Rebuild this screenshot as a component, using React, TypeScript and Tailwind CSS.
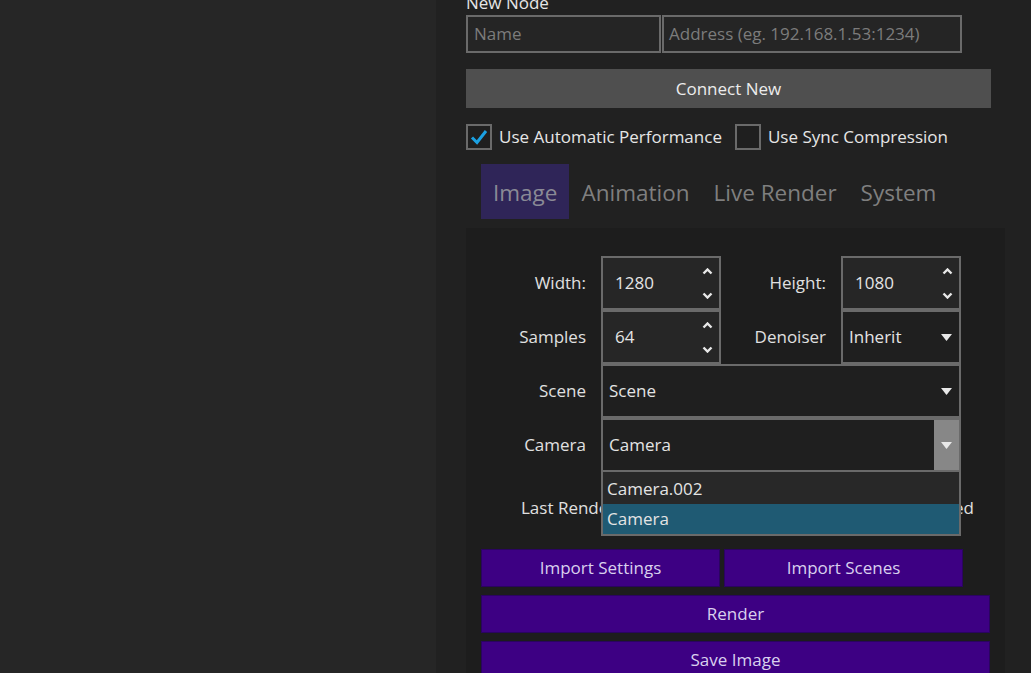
import { useState } from 'react'

const font = "font-['Segoe_UI','Open_Sans','Noto_Sans',sans-serif]"

function Caret() {
  return (
    <svg width="11" height="7" viewBox="0 0 11 7" className="shrink-0">
      <path d="M0 0 L11 0 L5.5 7 Z" fill="#e8e8e8" />
    </svg>
  )
}

function Chevron({ up }: { up?: boolean }) {
  return (
    <svg width="11" height="7" viewBox="0 0 11 7">
      <path
        d={up ? 'M1.5 5.5 L5.5 1.5 L9.5 5.5' : 'M1.5 1.5 L5.5 5.5 L9.5 1.5'}
        fill="none"
        stroke="#e8e8e8"
        strokeWidth="2.4"
      />
    </svg>
  )
}

function Spinner({ value }: { value: string }) {
  return (
    <div className="flex h-[54px] w-[120px] items-center justify-between border-2 border-[#6a6a6a] bg-[#262626] pl-[12px] pr-[6px]">
      <span className="text-[17px] text-[#e4e4e4]">{value}</span>
      <div className="flex h-full flex-col justify-between pb-[9px] pt-[10px]">
        <Chevron up />
        <Chevron />
      </div>
    </div>
  )
}

function Select({ value, hovered, wide }: { value: string; hovered?: boolean; wide?: boolean }) {
  return (
    <div
      className={`flex h-[54px] ${wide ? 'w-[360px]' : 'w-[120px]'} items-stretch border-2 border-[#6a6a6a] bg-[#1f1f1f]`}
    >
      <span className="flex flex-1 items-center pl-[6px] text-[17px] text-[#e4e4e4]">{value}</span>
      <div className={`flex w-[25px] items-center justify-center ${hovered ? 'bg-[#878787]' : ''}`}>
        <Caret />
      </div>
    </div>
  )
}

function Label({ text, w }: { text: string; w: string }) {
  return <div className={`${w} pr-[15px] text-right text-[17px] text-[#e0e0e0]`}>{text}</div>
}

function CheckBox({ checked, label }: { checked?: boolean; label: string }) {
  return (
    <div className="flex items-center gap-[7px]">
      <div className="flex h-[26px] w-[26px] items-center justify-center border-2 border-[#6a6a6a] bg-[#1f1f1f]">
        {checked && (
          <svg width="18" height="16" viewBox="0 0 18 16">
            <path d="M2 8.5 L7 13.5 L16 2" fill="none" stroke="#1ba1e2" strokeWidth="3" />
          </svg>
        )}
      </div>
      <span className="text-[17px] text-[#e6e6e6]">{label}</span>
    </div>
  )
}

const tabs = ['Image', 'Animation', 'Live Render', 'System']

export default function App() {
  const [tab] = useState('Image')

  return (
    <div className={`flex h-[673px] w-[1031px] overflow-hidden bg-[#262626] ${font}`}>
      <div className="w-[436px]" />
      <div className="flex w-[595px] flex-col bg-[#212121] pl-[30px]">
        <div className="mt-[-9px] h-[24px] shrink-0 text-[17px] leading-[24px] text-[#e6e6e6]">New Node</div>

        {/* new node inputs */}
        <div className="flex shrink-0 gap-[1px]">
          <div className="flex h-[38px] w-[195px] items-center border-2 border-[#6a6a6a] bg-[#252525] pl-[6px] text-[17px] text-[#7c7c7c]">
            Name
          </div>
          <div className="flex h-[38px] w-[300px] items-center border-2 border-[#6a6a6a] bg-[#252525] pl-[5px] text-[17px] text-[#7c7c7c]">
            Address (eg. 192.168.1.53:1234)
          </div>
        </div>

        <div className="mt-[16px] flex h-[39px] w-[525px] shrink-0 items-center justify-center bg-[#4f4f4f] text-[17px] text-[#ececec]">
          Connect New
        </div>

        <div className="mt-[16px] flex h-[26px] shrink-0 items-center gap-[13px]">
          <CheckBox checked label="Use Automatic Performance" />
          <CheckBox label="Use Sync Compression" />
        </div>

        {/* tabs */}
        <div className="mt-[14px] flex h-[55px] shrink-0 pl-[15px]">
          {tabs.map(t => (
            <div
              key={t}
              className={`flex items-center px-[12px] pt-[2px] text-[22.5px] ${t === tab ? 'bg-[#2f2558] text-[#8a8a96]' : 'text-[#7f7f7f]'}`}
            >
              {t}
            </div>
          ))}
        </div>

        {/* tab content */}
        <div className="relative mt-[9px] flex w-[539px] shrink-0 flex-col bg-[#1d1d1d] pb-[20px] pt-[28px]">
          <div className="flex items-center">
            <Label text="Width:" w="w-[135px]" />
            <Spinner value="1280" />
            <Label text="Height:" w="w-[120px]" />
            <Spinner value="1080" />
          </div>
          <div className="flex items-center">
            <Label text="Samples" w="w-[135px]" />
            <Spinner value="64" />
            <Label text="Denoiser" w="w-[120px]" />
            <Select value="Inherit" />
          </div>
          <div className="flex items-center">
            <Label text="Scene" w="w-[135px]" />
            <Select value="Scene" wide />
          </div>
          <div className="flex items-center">
            <Label text="Camera" w="w-[135px]" />
            <Select value="Camera" wide hovered />
          </div>
          <div className="flex h-[77px] items-center pb-[6px] pl-[55px] text-[17px] text-[#e0e0e0]">
            <span className="whitespace-nowrap">Last Render:</span>
            <span className="ml-auto mr-[31px] whitespace-nowrap">Not Rendered</span>
          </div>

          {/* buttons */}
          <div className="flex flex-col gap-[8px] pl-[15px]">
            <div className="flex gap-[4px]">
              <div className="flex h-[38px] w-[239px] items-center justify-center border border-[#2a0460] bg-[#3d0083] text-[17px] text-[#d9d0ee]">
                Import Settings
              </div>
              <div className="flex h-[38px] w-[239px] items-center justify-center border border-[#2a0460] bg-[#3d0083] text-[17px] text-[#d9d0ee]">
                Import Scenes
              </div>
            </div>
            <div className="flex h-[38px] w-[509px] items-center justify-center border border-[#2a0460] bg-[#3d0083] text-[17px] text-[#d9d0ee]">
              Render
            </div>
            <div className="flex h-[38px] w-[509px] items-center justify-center border border-[#2a0460] bg-[#3d0083] text-[17px] text-[#d9d0ee]">
              Save Image
            </div>
          </div>

          {/* open camera dropdown */}
          <div className="absolute left-[135px] top-[244px] w-[360px] border-2 border-t-0 border-[#6a6a6a] bg-[#282828] pt-[2px] text-[17px] text-[#e4e4e4]">
            <div className="flex h-[30px] items-center pl-[4px]">Camera.002</div>
            <div className="flex h-[30px] items-center bg-[#1f5a73] pl-[4px]">Camera</div>
          </div>
        </div>
      </div>
    </div>
  )
}
